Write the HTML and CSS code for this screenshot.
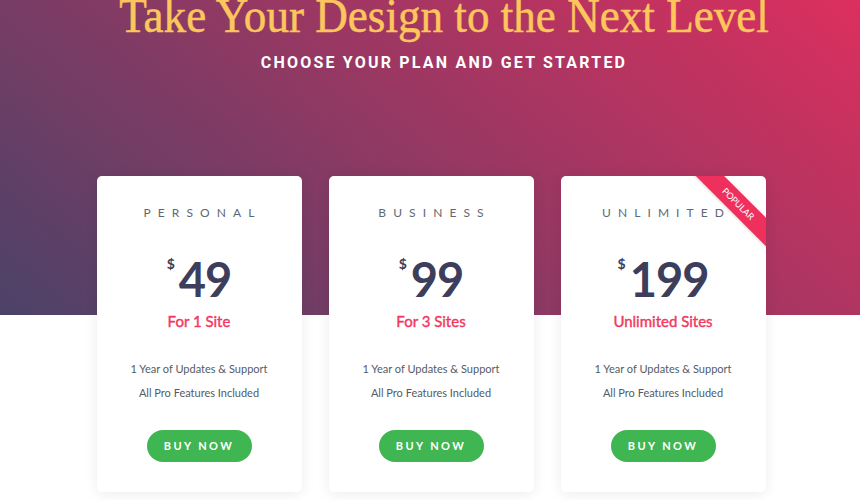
FILE: index.html
```html
<!DOCTYPE html>
<html>
<head>
<meta charset="utf-8">
<link rel="stylesheet" href="styles.css">
</head>
<body>
<header class="hero">
  <h1 class="title">Take Your Design to the Next Level</h1>
  <p class="subtitle">CHOOSE YOUR PLAN AND GET STARTED</p>
</header>
<main class="plans">
  <div class="card">
    <h2 class="plan-name">PERSONAL</h2>
    <div class="price"><span class="currency">$</span><span class="amount">49</span></div>
    <div class="sites">For 1 Site</div>
    <ul class="features">
      <li>1 Year of Updates &amp; Support</li>
      <li>All Pro Features Included</li>
    </ul>
    <a class="buy" href="#">BUY NOW</a>
  </div>
  <div class="card">
    <h2 class="plan-name">BUSINESS</h2>
    <div class="price"><span class="currency">$</span><span class="amount">99</span></div>
    <div class="sites">For 3 Sites</div>
    <ul class="features">
      <li>1 Year of Updates &amp; Support</li>
      <li>All Pro Features Included</li>
    </ul>
    <a class="buy" href="#">BUY NOW</a>
  </div>
  <div class="card">
    <div class="ribbon">POPULAR</div>
    <h2 class="plan-name">UNLIMITED</h2>
    <div class="price"><span class="currency">$</span><span class="amount">199</span></div>
    <div class="sites">Unlimited Sites</div>
    <ul class="features">
      <li>1 Year of Updates &amp; Support</li>
      <li>All Pro Features Included</li>
    </ul>
    <a class="buy" href="#">BUY NOW</a>
  </div>
</main>
</body>
</html>
```
FILE: styles.css
```css
html, body {
  margin: 0;
  padding: 0;
}
body {
  width: 860px;
  height: 500px;
  overflow: hidden;
  font-family: Lato, "Open Sans", sans-serif;
  background:
    linear-gradient(40deg, #4b4268 0%, #dc2f5e 100%) top left / 100% 315px no-repeat,
    #ffffff;
}
.hero {
  text-align: center;
  padding-top: 1px;
  padding-left: 28px;
}
.title {
  margin: -12px 0 0;
  font-family: "Liberation Serif", "DejaVu Serif", serif;
  font-weight: normal;
  font-size: 48px;
  line-height: 54px;
  color: #fcc65c;
  -webkit-text-stroke: 0.5px #fcc65c;
  transform: scaleX(0.94);
}
.subtitle {
  margin: 10px 0 0;
  font-family: Roboto, "Liberation Sans", sans-serif;
  font-weight: 700;
  font-size: 16px;
  letter-spacing: 2.2px;
  color: #ffffff;
  line-height: 20px;
}
.plans {
  display: flex;
  justify-content: center;
  gap: 27px;
  margin-top: 103px;
  padding-left: 2px;
}
.card {
  position: relative;
  overflow: hidden;
  width: 205px;
  height: 316px;
  background: #ffffff;
  border-radius: 5px;
  box-shadow: 0 2px 14px rgba(0, 0, 0, 0.08);
  text-align: center;
  box-sizing: border-box;
  padding-top: 29px;
}
.plan-name {
  margin: 0;
  font-size: 12px;
  font-weight: 400;
  letter-spacing: 7.1px;
  padding-left: 7px;
  color: #5e6874;
  line-height: 16px;
}
.price {
  margin-top: 33px;
  display: flex;
  justify-content: center;
  align-items: flex-start;
  color: #3d3d5c;
  height: 50px;
}
.currency {
  font-size: 14px;
  font-weight: 700;
  line-height: 14px;
  margin-top: 3px;
  margin-right: 4px;
}
.amount {
  font-size: 47px;
  font-weight: 700;
  line-height: 50px;
  letter-spacing: -1px;
}
.sites {
  margin-top: 8px;
  font-size: 15px;
  font-weight: 400;
  color: #f2385f;
  line-height: 18px;
  -webkit-text-stroke: 0.4px #f2385f;
}
.features {
  list-style: none;
  margin: 27px 0 0;
  padding: 0;
  font-size: 11px;
  color: #555b66;
  line-height: 24px;
}
.buy {
  display: inline-block;
  margin-top: 25px;
  width: 105px;
  height: 32px;
  line-height: 32px;
  border-radius: 16px;
  background: #40b653;
  color: #ffffff;
  font-size: 11px;
  font-weight: 700;
  letter-spacing: 2.4px;
  text-decoration: none;
}
.ribbon {
  position: absolute;
  top: 18px;
  right: -32px;
  width: 120px;
  height: 20px;
  line-height: 20px;
  background: #ef2f5c;
  color: #ffffff;
  font-size: 9px;
  text-align: center;
  transform: rotate(45deg);
  box-shadow: 0 1px 3px rgba(0, 0, 0, 0.15);
}
```
